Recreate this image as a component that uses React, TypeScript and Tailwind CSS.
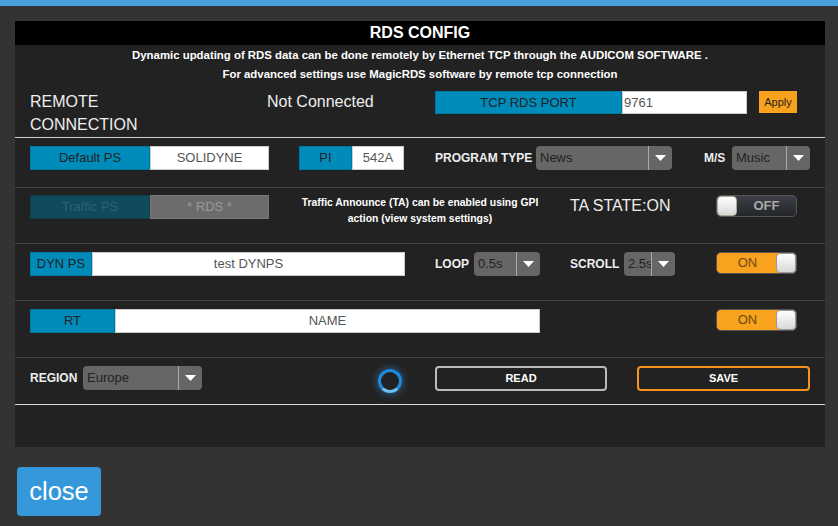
import React from 'react';

const font = { fontFamily: '"Liberation Sans", Arial, sans-serif' };

function Select({ value, width }: { value: string; width: string }) {
  return (
    <div className={`${width} h-[24px] bg-[#666] rounded-[4px] flex items-center overflow-hidden`}>
      <span className="flex-1 pl-[4px] text-[13px] text-[#222] whitespace-nowrap overflow-hidden">{value}</span>
      <div className="w-[24px] h-full border-l border-[#aaa] flex items-center justify-center">
        <svg width="11" height="6" viewBox="0 0 11 6">
          <path d="M0 0 H11 L5.5 6 Z" fill="#fff" />
        </svg>
      </div>
    </div>
  );
}

function Toggle({ on }: { on: boolean }) {
  if (on) {
    return (
      <div className="w-[81px] h-[22px] rounded-[5px] bg-[#f9a21d] border border-[#555] flex items-center">
        <span className="flex-1 text-center text-[13px] text-[#6b4a10] pl-[2px]">ON</span>
        <div className="w-[20px] h-[20px] rounded-[4px] bg-gradient-to-b from-white to-[#d8d8d8] border border-[#999]" />
      </div>
    );
  }
  return (
    <div className="w-[81px] h-[22px] rounded-[5px] bg-gradient-to-b from-[#3c3f46] to-[#24262b] border border-[#555] flex items-center">
      <div className="w-[20px] h-[20px] rounded-[4px] bg-gradient-to-b from-white to-[#d8d8d8] border border-[#aa9]" />
      <span className="flex-1 text-center text-[13px] font-bold text-[#aaa]">OFF</span>
    </div>
  );
}

function Tag({ text, width, dim }: { text: string; width: string; dim?: boolean }) {
  return (
    <div
      className={`${width} h-[24px] flex items-center justify-center text-[13px] border ${
        dim ? 'bg-[#114a5c] border-[#0d3d4c] text-[#2d6273]' : 'bg-[#008cba] border-[#0078a0] text-[#222]'
      }`}
    >
      {text}
    </div>
  );
}

function Field({ text, width, dim }: { text: string; width: string; dim?: boolean }) {
  return (
    <div
      className={`${width} h-[24px] flex items-center justify-center text-[13px] border ${
        dim ? 'bg-[#6c6c6c] border-[#777] text-[#9a9a9a]' : 'bg-white border-[#ccc] text-[#555]'
      }`}
    >
      {text}
    </div>
  );
}

export default function App() {
  return (
    <div className="w-[838px] h-[526px] bg-[#333] overflow-hidden text-[#eee]" style={font}>
      <div className="h-[6px] bg-[#4aa0dc]" />
      <div className="mt-[15px] ml-[15px] w-[810px] h-[426px] bg-[#222] flex flex-col">
        <div className="h-[24px] bg-black flex items-center justify-center text-[16px] font-bold text-white">
          RDS CONFIG
        </div>
        <div className="h-[38px] pt-[1px] text-center text-[11.4px] font-bold leading-[19px] text-white">
          <div>Dynamic updating of RDS data can be done remotely by Ethernet TCP through the AUDICOM SOFTWARE .</div>
          <div>For advanced settings use MagicRDS software by remote tcp connection</div>
        </div>

        {/* remote connection */}
        <div className="h-[55px] border-b border-[#ccc] flex items-start pt-[8px] pl-[15px]">
          <div className="w-[237px] text-[16px] leading-[23px] -mt-[1px]">
            REMOTE
            <br />
            CONNECTION
          </div>
          <div className="w-[168px] text-[16px] leading-[23px] -mt-[1px]">Not Connected</div>
          <div className="w-[187px] h-[23px] bg-[#008cba] border border-[#0078a0] flex items-center justify-center text-[13px] text-[#222]">
            TCP RDS PORT
          </div>
          <div className="w-[125px] h-[23px] bg-white border border-[#ccc] flex items-center pl-[1px] text-[13px] text-[#555]">
            9761
          </div>
          <div className="ml-[12px] w-[38px] h-[22px] bg-[#f9a21d] flex items-center justify-center text-[11px] text-[#222]">
            Apply
          </div>
        </div>

        {/* default ps / pi / program type */}
        <div className="h-[50px] border-b border-[#444] flex items-start pt-[8px] pl-[15px]">
          <Tag text="Default PS" width="w-[120px]" />
          <Field text="SOLIDYNE" width="w-[119px]" />
          <div className="ml-[30px] flex">
            <Tag text="PI" width="w-[53px]" />
            <Field text="542A" width="w-[52px]" />
          </div>
          <div className="ml-[31px] w-[101px] h-[24px] flex items-center text-[12px] font-bold">PROGRAM TYPE</div>
          <Select value="News" width="w-[136px]" />
          <div className="ml-[32px] w-[28px] h-[24px] flex items-center text-[12px] font-bold">M/S</div>
          <Select value="Music" width="w-[78px]" />
        </div>

        {/* traffic */}
        <div className="h-[56px] border-b border-[#444] flex items-start pt-[7px] pl-[15px]">
          <Tag text="Traffic PS" width="w-[120px]" dim />
          <Field text="* RDS *" width="w-[119px]" dim />
          <div className="ml-[16px] w-[270px] text-center text-[10.4px] font-bold leading-[16px] text-white">
            Traffic Announce (TA) can be enabled using GPI
            <br />
            action (view system settings)
          </div>
          <div className="ml-[15px] w-[146px] h-[22px] flex items-center text-[16px]">TA STATE:ON</div>
          <Toggle on={false} />
        </div>

        {/* dyn ps */}
        <div className="h-[57px] border-b border-[#444] flex items-start pt-[8px] pl-[15px]">
          <Tag text="DYN PS" width="w-[62px]" />
          <Field text="test DYNPS" width="w-[313px]" />
          <div className="ml-[30px] w-[39px] h-[24px] flex items-center text-[12px] font-bold">LOOP</div>
          <Select value="0.5s" width="w-[66px]" />
          <div className="ml-[30px] w-[54px] h-[24px] flex items-center text-[12px] font-bold">SCROLL</div>
          <Select value="2.5s" width="w-[51px]" />
          <div className="ml-[41px]">
            <Toggle on />
          </div>
        </div>

        {/* rt */}
        <div className="h-[57px] border-b border-[#444] flex items-start pt-[8px] pl-[15px]">
          <Tag text="RT" width="w-[85px]" />
          <Field text="NAME" width="w-[425px]" />
          <div className="ml-[176px]">
            <Toggle on />
          </div>
        </div>

        {/* region / read / save */}
        <div className="h-[47px] border-b border-[#ddd] flex items-start pt-[8px] pl-[15px]">
          <div className="w-[53px] h-[24px] flex items-center text-[12px] font-bold">REGION</div>
          <Select value="Europe" width="w-[119px]" />
          <div className="ml-[176px] mt-[3px] w-[24px] h-[24px] rounded-full border-[3px] border-[#1b8ce0] border-b-[#6cc0f5] shadow-[0_0_8px_rgba(60,160,255,0.6)]" />
          <div className="ml-[33px] w-[172px] h-[25px] rounded-[4px] border-2 border-[#bbb] flex items-center justify-center text-[11px] font-bold text-white">
            READ
          </div>
          <div className="ml-[30px] w-[173px] h-[25px] rounded-[4px] border-2 border-[#f7931e] flex items-center justify-center text-[11px] font-bold text-white">
            SAVE
          </div>
        </div>
      </div>

      <div className="mt-[20px] ml-[17px] w-[84px] h-[49px] rounded-[4px] bg-[#3498db] flex items-center justify-center text-[25.5px] text-white">
        close
      </div>
    </div>
  );
}
